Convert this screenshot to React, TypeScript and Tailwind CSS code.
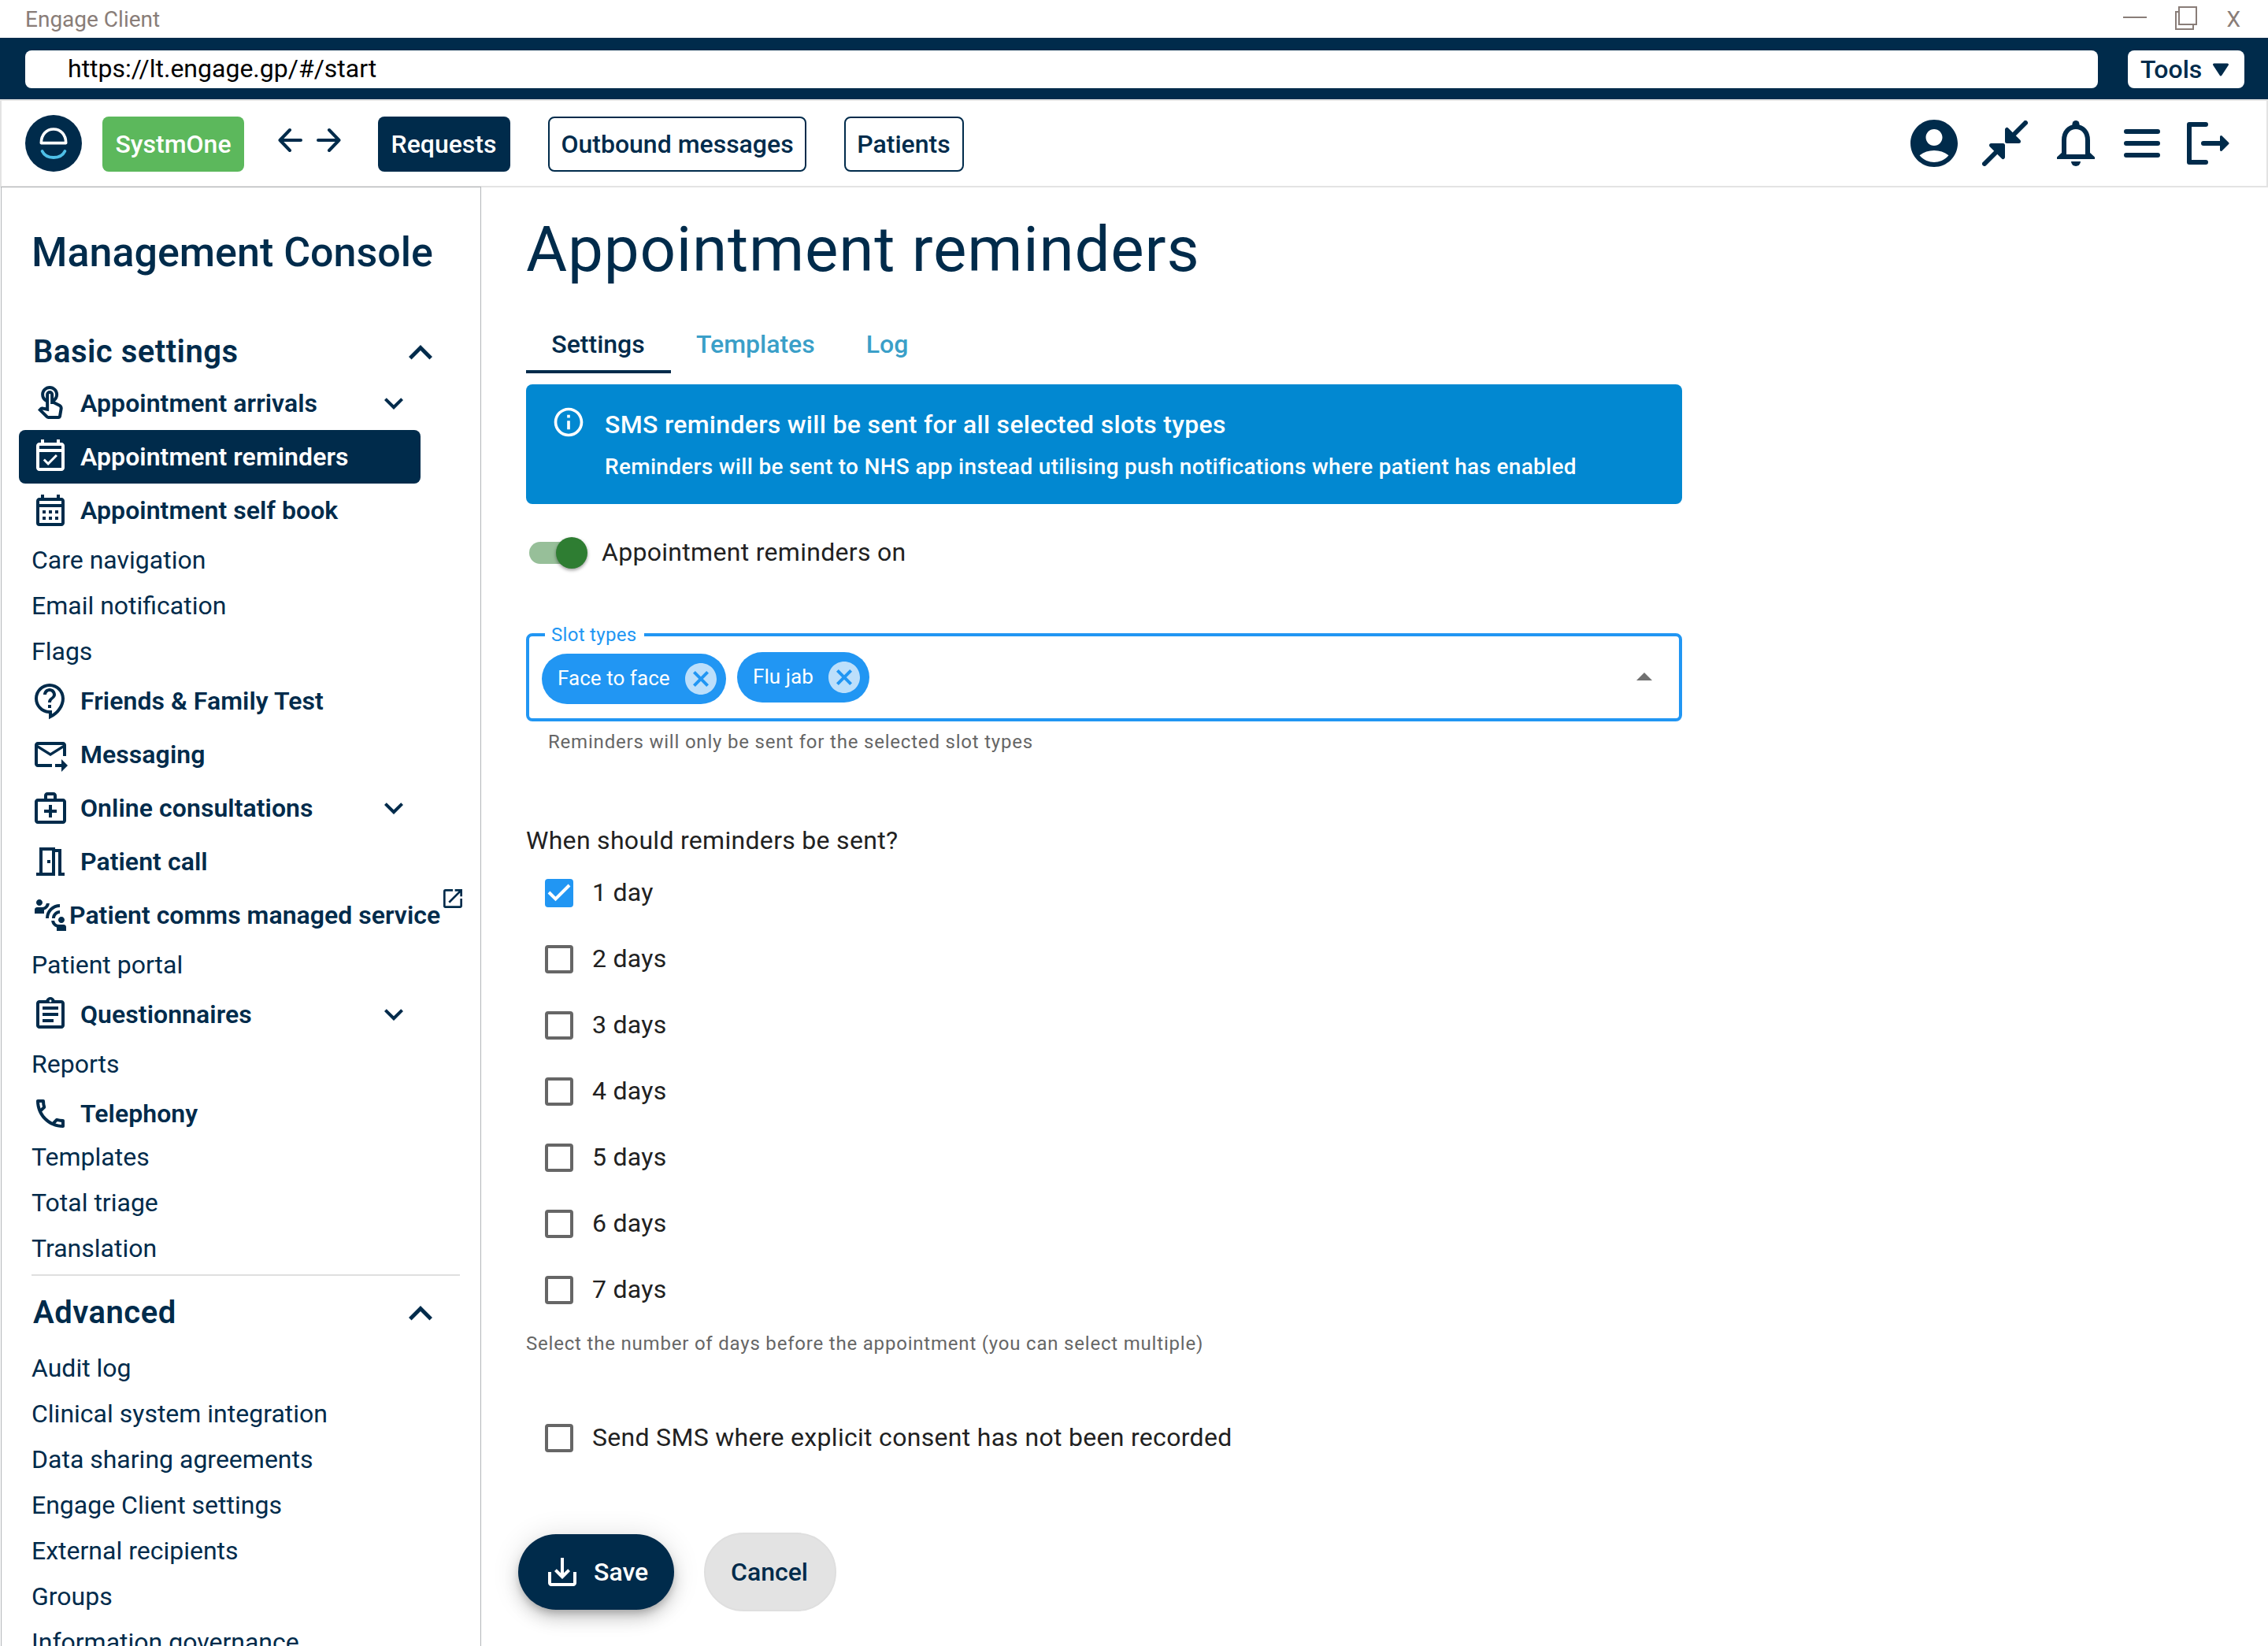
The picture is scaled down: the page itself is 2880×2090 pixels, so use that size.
import type { ReactNode } from "react";
import {
  MdAccountCircle,
  MdCancel,
  MdConnectWithoutContact,
  MdExpandLess,
  MdExpandMore,
  MdInfoOutline,
  MdOpenInNew,
  MdOutlineAssignment,
  MdOutlineCalendarMonth,
  MdOutlineCall,
  MdOutlineContactSupport,
  MdOutlineEventAvailable,
  MdOutlineForwardToInbox,
  MdOutlineMedicalServices,
  MdOutlineMeetingRoom,
  MdOutlineTouchApp,
  MdSaveAlt,
} from "react-icons/md";

type NavItem = {
  label: string;
  icon?: ReactNode;
  active?: boolean;
  expandable?: boolean;
  external?: boolean;
};

const basicItems: NavItem[] = [
  { label: "Appointment arrivals", icon: <MdOutlineTouchApp size={48} />, expandable: true },
  { label: "Appointment reminders", icon: <MdOutlineEventAvailable size={48} />, active: true },
  { label: "Appointment self book", icon: <MdOutlineCalendarMonth size={48} /> },
  { label: "Care navigation" },
  { label: "Email notification" },
  { label: "Flags" },
  { label: "Friends & Family Test", icon: <MdOutlineContactSupport size={48} /> },
  { label: "Messaging", icon: <MdOutlineForwardToInbox size={48} /> },
  { label: "Online consultations", icon: <MdOutlineMedicalServices size={48} />, expandable: true },
  { label: "Patient call", icon: <MdOutlineMeetingRoom size={48} /> },
  { label: "Patient comms managed service", icon: <MdConnectWithoutContact size={48} />, external: true },
  { label: "Patient portal" },
  { label: "Questionnaires", icon: <MdOutlineAssignment size={48} />, expandable: true },
  { label: "Reports" },
  { label: "Telephony", icon: <MdOutlineCall size={48} /> },
  { label: "Templates" },
  { label: "Total triage" },
  { label: "Translation" },
];

const advancedItems = [
  "Audit log",
  "Clinical system integration",
  "Data sharing agreements",
  "Engage Client settings",
  "External recipients",
  "Groups",
  "Information governance",
];

const days = ["1 day", "2 days", "3 days", "4 days", "5 days", "6 days", "7 days"];

function Logo() {
  return (
    <svg width="72" height="72" viewBox="0 0 72 72" fill="none">
      <circle cx="36" cy="36" r="36" fill="#002b4b" />
      <path d="M20.3 35.6C20.3 25 27 18 36 18S51.7 25 51.7 35.6Z" stroke="#fff" strokeWidth="3.6" strokeLinejoin="round" />
      <path d="M21.6 46C24 51 29.5 54 36 54S48 51 50.4 46" stroke="#4fc0e8" strokeWidth="3.8" strokeLinecap="round" />
    </svg>
  );
}

function TitleBar() {
  return (
    <div className="flex h-12 items-center justify-between pl-8 pr-[35px] text-[#897d78]">
      <span className="pt-px text-[28px] leading-[28px]">Engage Client</span>
      <div className="flex items-start">
        <svg width="30" height="32" viewBox="0 0 30 32" className="mr-9">
          <path d="M0 14H30" stroke="currentColor" strokeWidth="2" />
        </svg>
        <svg width="28" height="32" viewBox="0 0 28 32" fill="none" stroke="currentColor" strokeWidth="2" className="mr-[37px]">
          <path d="M5 1H27V23H5Z" />
          <path d="M5 7H1V29H23V23" />
        </svg>
        <span className="pt-px text-[28px] leading-[32px]">X</span>
      </div>
    </div>
  );
}

function AddressBar() {
  return (
    <div className="flex h-[78px] items-start bg-[#002b4b] pl-8 pr-[30px] pt-4">
      <div className="flex h-12 w-[2632px] items-center rounded-lg bg-white pb-[2px] pl-[54px] text-[32px] leading-[46px] text-black">
        https://lt.engage.gp/#/start
      </div>
      <button className="ml-[38px] flex h-12 w-[148px] items-center rounded-lg bg-white pl-4 text-[32px] font-medium leading-[48px]">
        Tools
        <svg width="22" height="18" viewBox="0 0 22 18" className="ml-[13px] mt-[2px]">
          <path d="M2.5 2H19.5L11 15Z" fill="currentColor" stroke="currentColor" strokeWidth="3" strokeLinejoin="round" />
        </svg>
      </button>
    </div>
  );
}

function Header() {
  return (
    <header className="flex h-28 items-center border-2 border-[#e3e3e3] px-[30px]">
      <Logo />
      <button className="ml-[26px] mt-[2px] flex h-[70px] w-[180px] items-center justify-center rounded-lg bg-[#5cb85c] text-[32px] font-medium text-white">
        SystmOne
      </button>
      <svg width="80" height="32" viewBox="0 0 80 32" fill="none" stroke="currentColor" strokeWidth="4" strokeLinecap="round" strokeLinejoin="round" className="mb-2 ml-[43px]">
        <path d="M15 3L2.5 16L15 29M2.5 16H29" />
        <path d="M65 3L77.5 16L65 29M77.5 16H51" />
      </svg>
      <button className="ml-[47px] mt-[2px] flex h-[70px] w-[168px] items-center justify-center rounded-lg bg-[#002b4b] pr-px text-[32px] font-medium text-white">
        Requests
      </button>
      <button className="ml-12 mt-[2px] flex h-[70px] w-[328px] items-center justify-center rounded-lg border-2 border-[#002b4b] text-[32px] font-medium">
        Outbound messages
      </button>
      <button className="ml-12 mt-[2px] flex h-[70px] w-[152px] items-center justify-center rounded-lg border-2 border-[#002b4b] pr-px text-[32px] font-medium">
        Patients
      </button>

      {/* Toolbar icons */}

      <div className="ml-auto mr-[17px] flex items-center">
        <MdAccountCircle size={72} className="mr-[25px]" />

        <svg width="58" height="58" viewBox="0 0 58 58" fill="none" stroke="currentColor" strokeWidth="6" strokeLinecap="round" strokeLinejoin="round" className="mr-[37px]">
          <path d="M55 3L36 22M3 55L22 36" />
          <path d="M31.5 11.5V26.5H46.5Z" fill="currentColor" strokeWidth="5" />
          <path d="M26.5 46.5V31.5H11.5Z" fill="currentColor" strokeWidth="5" />
        </svg>

        <svg width="48" height="60" viewBox="0 0 48 60" className="mr-[37px]">
          <path
            d="M9 46V26C9 16 15 9 24 9S39 16 39 26V46"
            fill="none"
            stroke="currentColor"
            strokeWidth="6"
          />
          <path d="M19.5 9V5.5A4.5 4.5 0 0 1 28.5 5.5V9Z" fill="currentColor" />
          <path d="M0 50V47.5L7 41V44H41V41L48 47.5V50Z" fill="currentColor" />
          <path d="M18 53H30A6 6 0 0 1 18 53Z" fill="currentColor" />
        </svg>

        <svg width="46" height="36" viewBox="0 0 46 36" stroke="currentColor" strokeWidth="6" strokeLinecap="round" className="mr-[34px]">
          <path d="M3 3H43M3 18H43M3 33H43" />
        </svg>

        <svg width="54" height="54" viewBox="0 0 54 54" fill="none" stroke="currentColor" strokeWidth="6" strokeLinecap="round" strokeLinejoin="round">
          <path d="M24 3H3V51H24M21 27H44" />
          <path d="M43.5 18.5L52 27L43.5 35.5Z" fill="currentColor" strokeWidth="3" />
        </svg>
      </div>
    </header>
  );
}

function SidebarRow({ item }: { item: NavItem }) {
  if (!item.icon) {
    return <li className="flex h-[58px] items-center pl-[38px] text-[32px] leading-[58px]">{item.label}</li>;
  }

  if (item.external) {
    return (
      <li className="flex h-[68px] items-center whitespace-nowrap pl-[38px] text-[32px] font-semibold tracking-[0.03px]">
        <MdConnectWithoutContact size={48} className="shrink-0" />
        {item.label}
        <MdOpenInNew size={32} className="mb-[42px] shrink-0" />
      </li>
    );
  }

  return (
    <li
      className={
        "ml-[22px] flex h-[68px] w-[510px] items-center rounded-lg pl-4 text-[32px] font-semibold tracking-[0.06px] " +
        (item.active ? "bg-[#002b4b] text-white " : "") +
        (item.label === "Telephony" ? "-mb-2" : "")
      }
    >
      {item.icon}
      <span className="ml-[14px]">{item.label}</span>
      {item.expandable && <MdExpandMore size={48} className="ml-auto mr-[10px]" />}
    </li>
  );
}

function Sidebar() {
  return (
    <aside className="-mt-px ml-px h-[1853px] w-[610px] shrink-0 overflow-hidden border border-b-0 border-[#b3b6b9]">
      <h2 className="mt-[51px] pl-[38px] text-[52px] font-medium leading-[64px]">Management Console</h2>

      {/* Basic settings */}

      <div className="mt-[63px] flex h-[62px] items-center justify-between pl-10 pr-[46px]">
        <h3 className="text-[40px] font-semibold leading-[62px] tracking-[0.5px]">Basic settings</h3>
        <MdExpandLess size={60} className="mt-[2px]" />
      </div>
      <ul>
        {basicItems.map((item) => (
          <SidebarRow key={item.label} item={item} />
        ))}
      </ul>

      <div className="ml-[38px] mt-1 w-[544px] border-t-2 border-[#dfdfdf]" />

      {/* Advanced */}

      <div className="mt-4 flex h-[62px] items-center justify-between pl-10 pr-[46px]">
        <h3 className="text-[40px] font-semibold leading-[62px] tracking-[0.5px]">Advanced</h3>
        <MdExpandLess size={60} className="mt-[2px]" />
      </div>
      <ul className="mt-[10px]">
        {advancedItems.map((label) => (
          <SidebarRow key={label} item={{ label }} />
        ))}
      </ul>
    </aside>
  );
}

function Checkbox({ label, checked }: { label: string; checked?: boolean }) {
  return (
    <label className="flex h-[84px] items-center pl-6 text-[32px] tracking-[0.3px] text-[#212121]">
      {checked ? (
        <span className="flex h-9 w-9 items-center justify-center rounded bg-[#2196f3]">
          <svg width="30" height="24" viewBox="0 0 30 24" fill="none" stroke="#fff" strokeWidth="4">
            <path d="M2 11L10.5 19.5L28 2" />
          </svg>
        </span>
      ) : (
        <span className="h-9 w-9 rounded border-4 border-[#666666]" />
      )}
      <span className="ml-6 pb-[2px]">{label}</span>
    </label>
  );
}

function Chip({ label, className }: { label: string; className: string }) {
  return (
    <span className={"flex h-16 items-center rounded-full bg-[#2196f3] pl-5 text-[26px] tracking-[0.05px] text-white " + className}>
      <span className="pb-[2px]">{label}</span>
      <MdCancel size={48} className="ml-auto mr-2 text-[#bcdffb]" />
    </span>
  );
}

function SlotTypes() {
  return (
    <div>
      <div className="relative flex h-28 w-[1468px] rounded-lg border-4 border-[#2196f3]">
        <span className="absolute -top-5 left-5 h-9 w-[126px] bg-white pl-2 text-[24px] leading-9 tracking-[0.3px] text-[#2196f3]">
          Slot types
        </span>
        <Chip label="Face to face" className="ml-4 mt-[22px] w-[234px]" />
        <Chip label="Flu jab" className="ml-[14px] mt-5 w-[168px]" />
        <svg width="20" height="10" viewBox="0 0 20 10" className="ml-auto mr-[34px] mt-[46px]">
          <path d="M0 10L10 0L20 10Z" fill="#707070" />
        </svg>
      </div>
      <p className="pl-7 pt-[6px] text-[24px] leading-[40px] tracking-[0.8px] text-[#666666]">
        Reminders will only be sent for the selected slot types
      </p>
    </div>
  );
}

function Content() {
  return (
    <main className="flex flex-col pl-[57px]">
      <h1 className="mt-[31px] text-[80px] leading-[96px] tracking-[0.8px]">Appointment reminders</h1>

      {/* Tabs */}

      <nav className="mt-[35px] flex h-[74px] text-[32px] font-medium leading-[74px] text-[#3a9fc8]">
        <span className="flex w-[184px] justify-center border-b-4 border-[#002b4b] pr-px text-[#002b4b]">Settings</span>
        <span className="ml-8">Templates</span>
        <span className="ml-[65px]">Log</span>
      </nav>

      <section className="mt-[14px] flex h-[152px] w-[1468px] rounded-lg bg-[#0288d1] pl-8 pt-[26px] text-white">
        <MdInfoOutline size={44} />
        <div className="ml-6 font-medium tracking-[0.3px]">
          <p className="text-[32px] leading-[50px]">SMS reminders will be sent for all selected slots types</p>
          <p className="mt-[7px] text-[28px] leading-[44px]">
            Reminders will be sent to NHS app instead utilising push notifications where patient has enabled
          </p>
        </div>
      </section>

      {/* Toggle */}

      <div className="mt-[42px] flex h-10 items-center pl-1">
        <div className="relative h-7 w-[68px] rounded-full bg-[#97bf99]">
          <span className="absolute -top-[6px] left-[34px] h-10 w-10 rounded-full bg-[#2e7d32] shadow-[0_2px_4px_rgba(0,0,0,0.4)]" />
        </div>
        <span className="ml-6 pb-[2px] text-[32px] leading-10 tracking-[0.3px] text-[#212121]">
          Appointment reminders on
        </span>
      </div>

      <div className="mt-[82px]">
        <SlotTypes />
      </div>

      {/* Reminder days */}

      <p className="mt-[85px] text-[32px] leading-[40px] tracking-[0.3px] text-[#212121]">
        When should reminders be sent?
      </p>
      <div className="mt-[5px]">
        {days.map((day) => (
          <Checkbox key={day} label={day} checked={day === "1 day"} />
        ))}
      </div>
      <p className="mt-[6px] text-[24px] leading-[40px] tracking-[0.8px] text-[#666666]">
        Select the number of days before the appointment (you can select multiple)
      </p>
      <div className="mt-[58px]">
        <Checkbox label="Send SMS where explicit consent has not been recorded" />
      </div>

      {/* Actions */}

      <div className="-ml-[10px] mt-[78px] flex items-center">
        <button className="flex h-24 w-[198px] items-center rounded-full bg-[#002b4b] pl-8 text-[32px] font-medium text-white shadow-[0_6px_10px_-2px_rgba(0,0,0,0.2),0_12px_20px_0_rgba(0,0,0,0.14),0_2px_36px_0_rgba(0,0,0,0.12)]">
          <MdSaveAlt size={48} />
          <span className="ml-4">Save</span>
        </button>
        <button className="ml-[38px] h-[100px] w-[168px] rounded-full border-2 border-[#dfdfdf] bg-[#e3e3e3] pr-[2px] text-[32px] font-medium">
          Cancel
        </button>
      </div>
    </main>
  );
}

export default function App() {
  return (
    <div className="h-[2090px] w-[2880px] overflow-hidden bg-white font-['Roboto',sans-serif] text-[#002b4b]">
      <TitleBar />
      <AddressBar />
      <Header />
      <div className="flex">
        <Sidebar />
        <Content />
      </div>
    </div>
  );
}
